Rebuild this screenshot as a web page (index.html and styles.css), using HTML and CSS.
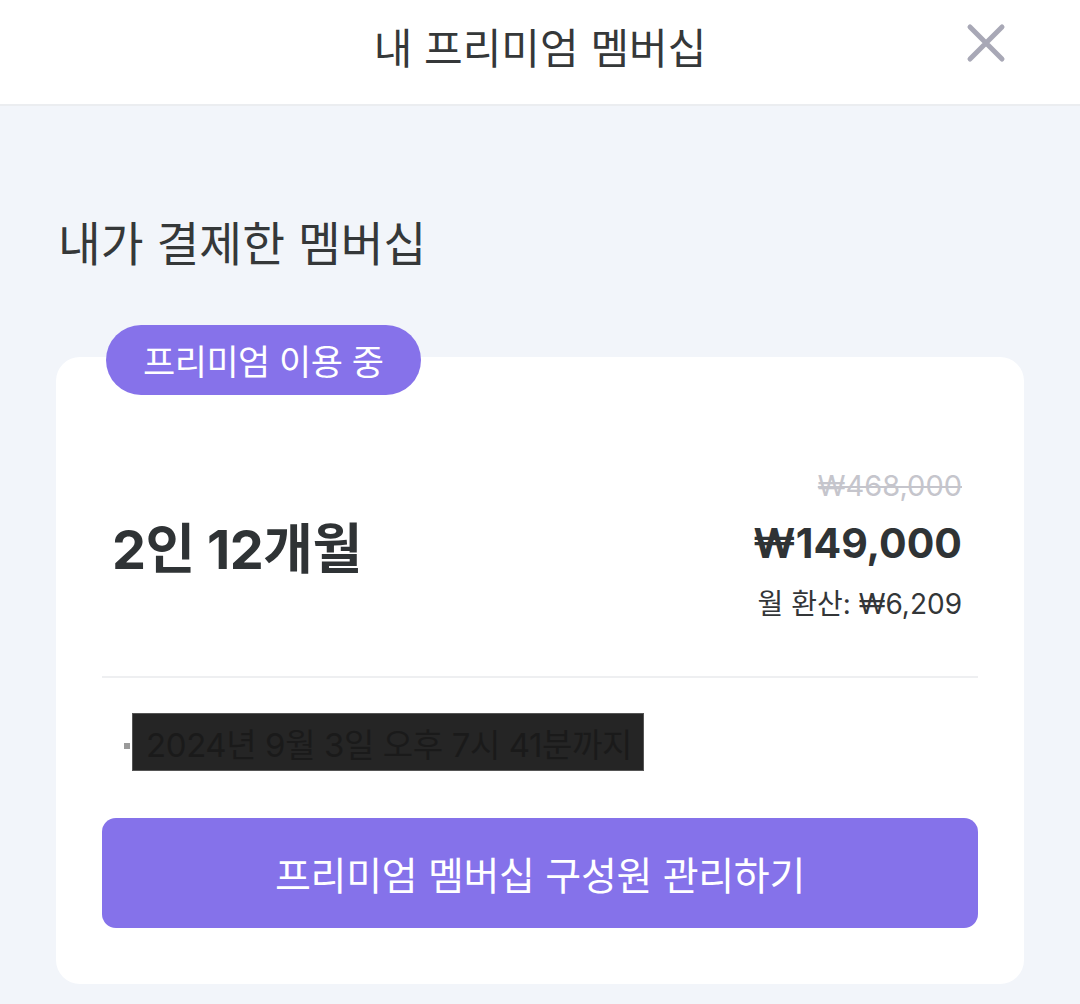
FILE: index.html
```html
<!DOCTYPE html>
<html lang="ko">
<head>
<meta charset="utf-8">
<link rel="stylesheet" href="styles.css">
</head>
<body>
<header class="topbar">
  <h1 class="title">내 프리미엄 멤버십</h1>
  <button class="close" aria-label="닫기">
    <svg width="40" height="40" viewBox="0 0 40 40"><path d="M4 4 L36 36 M36 4 L4 36" stroke="#a8a8b6" stroke-width="5" stroke-linecap="round" fill="none"/></svg>
  </button>
</header>
<main class="content">
  <h2 class="section-title">내가 결제한 멤버십</h2>
  <section class="card">
    <span class="badge">프리미엄 이용 중</span>
    <div class="plan">
      <div class="plan-name">2인 12개월</div>
      <div class="prices">
        <div class="orig">₩468,000</div>
        <div class="price">₩149,000</div>
        <div class="monthly">월 환산: ₩6,209</div>
      </div>
    </div>
    <hr class="divider">
    <div class="period"><span class="dot"></span><span class="redact">2024년 9월 3일 오후 7시 41분까지</span></div>
    <button class="manage">프리미엄 멤버십 구성원 관리하기</button>
  </section>
</main>
</body>
</html>
```
FILE: styles.css
```css
* { box-sizing: border-box; }
html, body { margin: 0; padding: 0; }
body {
  width: 1080px;
  height: 1004px;
  overflow: hidden;
  background: #f2f5fa;
  font-family: "Noto Sans CJK KR", "Noto Sans", sans-serif;
  color: #333638;
}
.topbar {
  height: 106px;
  background: #fff;
  border-bottom: 2px solid #ebedf0;
  display: flex;
  align-items: center;
  justify-content: center;
  position: relative;
}
.title {
  margin: 0 0 14px;
  font-size: 42px;
  font-weight: 400;
  color: #353839;
  letter-spacing: 0;
}
.close {
  position: absolute;
  right: 74px;
  top: 23px;
  width: 40px;
  height: 40px;
  padding: 0;
  border: 0;
  background: none;
}
.close svg { display: block; }
.content {
  padding: 107px 56px 0;
}
.section-title {
  margin: 0 0 0 2px;
  font-size: 46.5px;
  font-weight: 400;
  line-height: 56px;
  color: #353839;
  letter-spacing: 0;
}
.card {
  position: relative;
  margin-top: 88px;
  background: #fff;
  border-radius: 24px;
  padding: 109px 46px 56px;
  height: 627px;
}
.badge {
  position: absolute;
  left: 50px;
  top: -32px;
  height: 70px;
  padding: 0 37px;
  border-radius: 35px;
  background: #8672ea;
  color: #fff;
  font-size: 35px;
  line-height: 70px;
  letter-spacing: -0.5px;
}
.plan {
  display: flex;
  justify-content: space-between;
  align-items: center;
  padding: 0 0 0 10px;
  margin-right: 16px;
}
.plan-name {
  font-family: "Inter", "Noto Sans CJK KR", sans-serif;
  font-size: 54px;
  font-weight: 700;
  color: #2f3335;
  letter-spacing: -0.5px;
  margin-top: -4px;
}
.prices {
  text-align: right;
  font-family: "Inter", "Noto Sans CJK KR", sans-serif;
}
.orig {
  font-size: 29px;
  line-height: 40px;
  color: #c5c5cc;
  text-decoration: line-through;
  text-decoration-thickness: 2px;
}
.price {
  font-size: 41px;
  line-height: 74px;
  font-weight: 700;
  color: #2f3335;
}
.monthly {
  font-size: 28px;
  line-height: 48px;
  color: #333638;
}
.divider {
  margin: 48px 0 0;
  border: 0;
  border-top: 2px solid #eeeff1;
}
.period {
  display: flex;
  align-items: center;
  margin-top: 35px;
  height: 58px;
}
.dot {
  width: 6px;
  height: 6px;
  background: #9a9a9a;
  margin: 8px 2px 0 22px;
}
.redact {
  background: #252525;
  color: #1a1a1a;
  height: 58px;
  line-height: 62px;
  padding: 0 11px 0 13px;
  font-family: "Inter", "Noto Sans CJK KR", sans-serif;
  font-size: 33px;
  letter-spacing: -0.4px;
  border: 1px solid #555;
}
.manage {
  display: block;
  width: 100%;
  margin-top: 47px;
  height: 110px;
  border: 0;
  border-radius: 14px;
  background: #8572ea;
  color: #fff;
  font-family: inherit;
  font-size: 39px;
  letter-spacing: -0.3px;
}
```
